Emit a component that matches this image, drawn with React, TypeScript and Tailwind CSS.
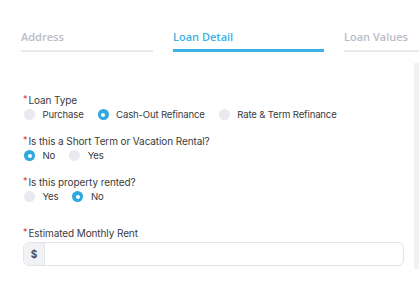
import { useState } from "react"

const tabs = [
  { label: "Address", width: "w-[132px]", active: false },
  { label: "Loan Detail", width: "w-[151px]", active: true },
  { label: "Loan Values", width: "w-[151px]", active: false },
]

function Radio({ checked, label, onClick }: { checked: boolean; label: string; onClick: () => void }) {
  return (
    <button type="button" onClick={onClick} className="flex items-center gap-[7.5px] mr-[14px]">
      {checked ? (
        <span className="flex h-[11px] w-[11px] items-center justify-center rounded-full bg-[#2ea8df]">
          <span className="h-[4px] w-[4px] rounded-full bg-white" />
        </span>
      ) : (
        <span className="h-[11px] w-[11px] rounded-full bg-[#e9eaef]" />
      )}
      <span>{label}</span>
    </button>
  )
}

function Label({ children }: { children: React.ReactNode }) {
  return (
    <div className="flex items-center h-[15px] text-[#3a3b40]">
      <span className="text-[#e02424] text-[9px] leading-none mr-[1px] -mt-[4px]">*</span>
      {children}
    </div>
  )
}

function RadioGroup({ options, initial }: { options: string[]; initial: string }) {
  const [value, setValue] = useState(initial)
  return (
    <div className="flex items-center h-[15px] pl-[1px] text-[9.6px] tracking-[-0.17px] text-[#3a3b40]">
      {options.map((o) => (
        <Radio key={o} label={o} checked={value === o} onClick={() => setValue(o)} />
      ))}
    </div>
  )
}

export default function App() {
  return (
    <div className="relative h-[282px] w-[419px] overflow-hidden bg-white">
      <div className="flex gap-[20px] pl-[21px] pt-[29px] whitespace-nowrap" style={{ fontFamily: '"Open Sans", sans-serif' }}>
        {tabs.map((t) => (
          <div
            key={t.label}
            className={`${t.width} shrink-0 pb-[4px] text-[11px] leading-[16px] font-semibold ${
              t.active ? "text-[#3bb3e6] border-b-[3px] border-[#3bb3e6] -mb-[0.5px]" : "text-[#bbbcc7] border-b-2 border-[#e9e9ef]"
            }`}
          >
            {t.label}
          </div>
        ))}
      </div>

      <div className="flex">
        <form
          className="flex-1 pl-[23px] pr-[10px] pt-[41px] text-[10px] tracking-[-0.1px]"
          style={{ fontFamily: 'Inter, "Liberation Sans", sans-serif' }}
        >
          <Label>Loan Type</Label>
          <RadioGroup options={["Purchase", "Cash-Out Refinance", "Rate & Term Refinance"]} initial="Cash-Out Refinance" />

          <div className="mt-[11px]">
            <Label>Is this a Short Term or Vacation Rental?</Label>
            <RadioGroup options={["No", "Yes"]} initial="No" />
          </div>

          <div className="mt-[11px]">
            <Label>Is this property rented?</Label>
            <RadioGroup options={["Yes", "No"]} initial="No" />
          </div>

          <div className="mt-[21px]">
            <Label>Estimated Monthly Rent</Label>
            <div className="mt-[1.5px] flex h-[24px] overflow-hidden rounded-[6px] border border-[#e3e4ea]">
              <span className="flex w-[21px] items-center justify-center bg-[#f1f2f5] border-r border-[#e3e4ea] text-[10px] font-bold text-[#4a4b50]">
                $
              </span>
              <input className="flex-1 px-2 outline-none" />
            </div>
          </div>
        </form>
        <div className="mt-[11px] h-[206px] w-[5px] bg-[#f2f2f5]" />
      </div>
    </div>
  )
}
